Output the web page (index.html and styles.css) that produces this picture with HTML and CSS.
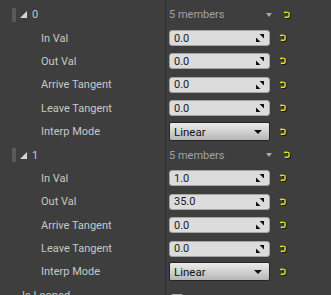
FILE: index.html
```html
<!DOCTYPE html>
<html lang="en">
<head>
  <meta charset="UTF-8" />
  <title>Details</title>
  <link rel="stylesheet" href="styles.css">
</head>
<body>
  <div class="panel">
    <div class="row group">
      <div class="name"><span class="grip"></span><span class="tri"></span><span class="idx">0</span></div>
      <div class="value"><span class="members">5 members</span><span class="caret"></span><svg class="reset head" viewBox="0 0 8 9"><path d="M3 1.5 H5.5 Q7 1.5 7 3.2 V5.3 Q7 7 5.5 7 H2"/><path class="tip" d="M0.5 1.5 L3.2 0 V3 Z"/></svg></div>
    </div>
    <div class="row">
      <div class="name label">In Val</div>
      <div class="value"><div class="num"><span>0.0</span><svg class="spin" viewBox="0 0 8 8"><path d="M3.5 0 H8 V4.5 Z M0 3.5 V8 H4.5 Z"/></svg></div><svg class="reset" viewBox="0 0 8 9"><path d="M3 1.5 H5.5 Q7 1.5 7 3.2 V5.3 Q7 7 5.5 7 H2"/><path class="tip" d="M0.5 1.5 L3.2 0 V3 Z"/></svg></div>
    </div>
    <div class="row">
      <div class="name label">Out Val</div>
      <div class="value"><div class="num"><span>0.0</span><svg class="spin" viewBox="0 0 8 8"><path d="M3.5 0 H8 V4.5 Z M0 3.5 V8 H4.5 Z"/></svg></div><svg class="reset" viewBox="0 0 8 9"><path d="M3 1.5 H5.5 Q7 1.5 7 3.2 V5.3 Q7 7 5.5 7 H2"/><path class="tip" d="M0.5 1.5 L3.2 0 V3 Z"/></svg></div>
    </div>
    <div class="row">
      <div class="name label">Arrive Tangent</div>
      <div class="value"><div class="num"><span>0.0</span><svg class="spin" viewBox="0 0 8 8"><path d="M3.5 0 H8 V4.5 Z M0 3.5 V8 H4.5 Z"/></svg></div><svg class="reset" viewBox="0 0 8 9"><path d="M3 1.5 H5.5 Q7 1.5 7 3.2 V5.3 Q7 7 5.5 7 H2"/><path class="tip" d="M0.5 1.5 L3.2 0 V3 Z"/></svg></div>
    </div>
    <div class="row">
      <div class="name label">Leave Tangent</div>
      <div class="value"><div class="num"><span>0.0</span><svg class="spin" viewBox="0 0 8 8"><path d="M3.5 0 H8 V4.5 Z M0 3.5 V8 H4.5 Z"/></svg></div><svg class="reset" viewBox="0 0 8 9"><path d="M3 1.5 H5.5 Q7 1.5 7 3.2 V5.3 Q7 7 5.5 7 H2"/><path class="tip" d="M0.5 1.5 L3.2 0 V3 Z"/></svg></div>
    </div>
    <div class="row">
      <div class="name label">Interp Mode</div>
      <div class="value"><div class="combo"><span>Linear</span><span class="arrow"></span></div><svg class="reset" viewBox="0 0 8 9"><path d="M3 1.5 H5.5 Q7 1.5 7 3.2 V5.3 Q7 7 5.5 7 H2"/><path class="tip" d="M0.5 1.5 L3.2 0 V3 Z"/></svg></div>
    </div>

    <div class="row group">
      <div class="name"><span class="grip"></span><span class="tri"></span><span class="idx">1</span></div>
      <div class="value"><span class="members">5 members</span><span class="caret"></span><svg class="reset head" viewBox="0 0 8 9"><path d="M3 1.5 H5.5 Q7 1.5 7 3.2 V5.3 Q7 7 5.5 7 H2"/><path class="tip" d="M0.5 1.5 L3.2 0 V3 Z"/></svg></div>
    </div>
    <div class="row">
      <div class="name label">In Val</div>
      <div class="value"><div class="num"><span>1.0</span><svg class="spin" viewBox="0 0 8 8"><path d="M3.5 0 H8 V4.5 Z M0 3.5 V8 H4.5 Z"/></svg></div><svg class="reset" viewBox="0 0 8 9"><path d="M3 1.5 H5.5 Q7 1.5 7 3.2 V5.3 Q7 7 5.5 7 H2"/><path class="tip" d="M0.5 1.5 L3.2 0 V3 Z"/></svg></div>
    </div>
    <div class="row">
      <div class="name label">Out Val</div>
      <div class="value"><div class="num"><span>35.0</span><svg class="spin" viewBox="0 0 8 8"><path d="M3.5 0 H8 V4.5 Z M0 3.5 V8 H4.5 Z"/></svg></div><svg class="reset" viewBox="0 0 8 9"><path d="M3 1.5 H5.5 Q7 1.5 7 3.2 V5.3 Q7 7 5.5 7 H2"/><path class="tip" d="M0.5 1.5 L3.2 0 V3 Z"/></svg></div>
    </div>
    <div class="row">
      <div class="name label">Arrive Tangent</div>
      <div class="value"><div class="num"><span>0.0</span><svg class="spin" viewBox="0 0 8 8"><path d="M3.5 0 H8 V4.5 Z M0 3.5 V8 H4.5 Z"/></svg></div><svg class="reset" viewBox="0 0 8 9"><path d="M3 1.5 H5.5 Q7 1.5 7 3.2 V5.3 Q7 7 5.5 7 H2"/><path class="tip" d="M0.5 1.5 L3.2 0 V3 Z"/></svg></div>
    </div>
    <div class="row">
      <div class="name label">Leave Tangent</div>
      <div class="value"><div class="num"><span>0.0</span><svg class="spin" viewBox="0 0 8 8"><path d="M3.5 0 H8 V4.5 Z M0 3.5 V8 H4.5 Z"/></svg></div><svg class="reset" viewBox="0 0 8 9"><path d="M3 1.5 H5.5 Q7 1.5 7 3.2 V5.3 Q7 7 5.5 7 H2"/><path class="tip" d="M0.5 1.5 L3.2 0 V3 Z"/></svg></div>
    </div>
    <div class="row">
      <div class="name label">Interp Mode</div>
      <div class="value"><div class="combo"><span>Linear</span><span class="arrow"></span></div><svg class="reset" viewBox="0 0 8 9"><path d="M3 1.5 H5.5 Q7 1.5 7 3.2 V5.3 Q7 7 5.5 7 H2"/><path class="tip" d="M0.5 1.5 L3.2 0 V3 Z"/></svg></div>
    </div>

    <div class="row">
      <div class="name top">Is Looped</div>
      <div class="value"><span class="check"></span></div>
    </div>
  </div>
</body>
</html>
```

FILE: styles.css
```css
html, body {
  margin: 0;
  padding: 0;
  background: #3e3e3e;
  overflow: hidden;
}
body {
  font-family: Roboto, "Liberation Sans", sans-serif;
  font-size: 11px;
  color: #c8c8c8;
}
.panel {
  padding-top: 3px;
  height: 292px;
  background: linear-gradient(to right, transparent 165px, #2c2c2c 165px, #2c2c2c 166px, transparent 166px);
}
.row {
  display: grid;
  grid-template-columns: 166px 1fr;
  height: 23.4px;
}
.name {
  display: flex;
  align-items: center;
  white-space: nowrap;
}
.label {
  padding-left: 41px;
}
.top {
  padding-left: 22px;
}
.grip {
  width: 4px;
  height: 14px;
  margin-left: 12px;
  background: radial-gradient(circle, #5a5a5a 0.8px, transparent 1px) 0 0 / 2px 2px;
}
.tri {
  width: 0;
  height: 0;
  margin-left: 4px;
  border-left: 7px solid transparent;
  border-bottom: 7px solid #d4d4d4;
}
.idx {
  margin-left: 5px;
}
.value {
  display: flex;
  align-items: center;
  padding-left: 3px;
}
.members {
  color: #a2a2a2;
  width: 97px;
}
.caret {
  width: 0;
  height: 0;
  border-left: 3.5px solid transparent;
  border-right: 3.5px solid transparent;
  border-top: 4px solid #a8a8a8;
}
.num {
  display: flex;
  align-items: center;
  justify-content: space-between;
  box-sizing: border-box;
  width: 101px;
  height: 16px;
  padding: 0 5px 0 4px;
  background: #dcdcdc;
  border: 1px solid #a4a4a4;
  border-radius: 3px;
  color: #1a1a1a;
}
.spin {
  width: 8px;
  height: 8px;
  fill: #111;
}
.combo {
  display: flex;
  align-items: center;
  justify-content: space-between;
  box-sizing: border-box;
  width: 101px;
  height: 19px;
  padding: 0 7px 0 4px;
  background: linear-gradient(#ececec, #b6b6b6);
  border: 1px solid #262626;
  border-radius: 2px;
  color: #111;
  font-size: 11.5px;
}
.arrow {
  width: 0;
  height: 0;
  border-left: 4px solid transparent;
  border-right: 4px solid transparent;
  border-top: 4px solid #111;
}
.reset {
  width: 7px;
  height: 8px;
  margin-left: 9px;
  fill: none;
  stroke: #e0e020;
  stroke-width: 1.6;
  overflow: visible;
  filter: drop-shadow(1px 1px 0 #1a1a1a);
}
.reset.head {
  margin-left: 11px;
}
.reset .tip {
  fill: #e0e020;
  stroke: none;
}
.check {
  width: 12px;
  height: 12px;
  margin-left: 2px;
  margin-top: 10px;
  background: #aaaaaa;
  border-radius: 2px;
}
```
